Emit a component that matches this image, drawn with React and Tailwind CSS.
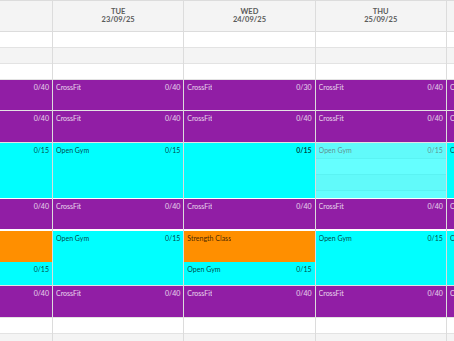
const ROW = 15.88;

const purple = 'bg-[#911ea5] text-white/80';
const cyan = 'bg-[#00ffff] text-black/75';
const orange = 'bg-[#ff8f00] text-black/75';

const crossfit = (start, count = '0/40') => ({ title: 'CrossFit', count, start, dur: 2, color: purple });
const openGym = (start, dur, extra = {}) => ({ title: 'Open Gym', count: '0/15', start, dur, color: cyan, ...extra });

const strengthPair = [
  { title: 'Strength Class', count: '', start: 12.5, dur: 2, color: orange, flush: true },
  openGym(14.5, 1.5),
];

// first column is scrolled mostly out of view, its header text is not visible
const days = [
  {
    name: '',
    date: '',
    events: [crossfit(3), crossfit(5), openGym(7, 3.5), crossfit(10.5), ...strengthPair, crossfit(16)],
  },
  {
    name: 'TUE',
    date: '23/09/25',
    events: [crossfit(3), crossfit(5), openGym(7, 3.5), crossfit(10.5), openGym(12.5, 3.5), crossfit(16)],
  },
  {
    name: 'WED',
    date: '24/09/25',
    events: [
      crossfit(3, '0/30'),
      crossfit(5),
      openGym(7, 3.5, { hideTitle: true, strong: true }),
      crossfit(10.5),
      ...strengthPair,
      crossfit(16),
    ],
  },
  {
    name: 'THU',
    date: '25/09/25',
    events: [crossfit(3), crossfit(5), openGym(7, 3.5, { faded: true }), crossfit(10.5), openGym(12.5, 3.5), crossfit(16)],
  },
  {
    name: 'FRI',
    date: '26/09/25',
    events: [crossfit(3), crossfit(5), openGym(7, 3.5), crossfit(10.5), openGym(12.5, 3.5), crossfit(16)],
  },
];

const Event = ({ ev }) => (
  <div
    className={`absolute left-0 right-0 flex items-start justify-between px-[3px] pt-[2px] text-[7px] leading-[10px] ${ev.color} ${ev.faded ? 'opacity-60' : ''}`}
    style={{ top: ev.start * ROW, height: ev.dur * ROW - (ev.flush ? 0 : 1) }}
  >
    <span className="truncate">{ev.hideTitle ? '' : ev.title}</span>
    <span className={ev.strong ? 'font-bold' : ''}>{ev.count}</span>
  </div>
);

const DayColumn = ({ day, first }) => (
  <div className={`shrink-0 w-[131.3px] border-l border-[#dcdcdc] ${first ? '-ml-[79.3px]' : ''}`}>
    <div className="h-[32px] border-t border-b border-[#dcdcdc] bg-[#f4f4f4] flex flex-col items-center justify-center text-[7.5px] leading-[8.5px] font-bold text-[#5a5a5a]">
      <span>{day.name}</span>
      <span>{day.date}</span>
    </div>
    <div className="relative">
      {Array.from({ length: 20 }).map((_, i) => (
        <div
          key={i}
          className={`h-[15.88px] border-b border-[#e3e3e3] ${i % 2 === 0 ? 'bg-white' : 'bg-[#f4f4f4]'}`}
        />
      ))}
      {day.events.map((ev, i) => (
        <Event key={i} ev={ev} />
      ))}
    </div>
  </div>
);

export default function App() {
  return (
    <div className="w-[454px] h-[341px] overflow-hidden bg-white font-['Lato',sans-serif]">
      <div className="flex">
        {days.map((day, i) => (
          <DayColumn key={i} day={day} first={i === 0} />
        ))}
      </div>
    </div>
  );
}
